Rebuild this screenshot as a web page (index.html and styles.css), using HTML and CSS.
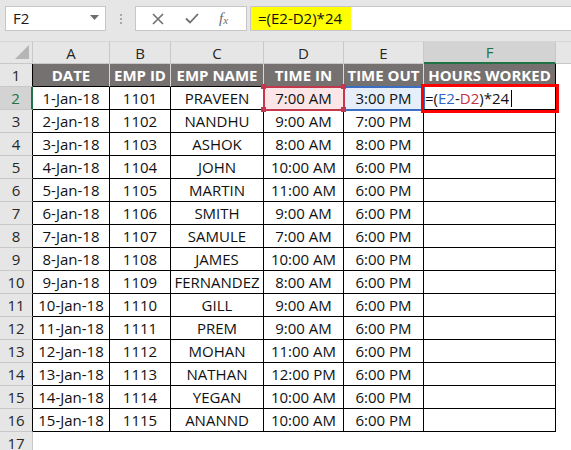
FILE: index.html
```html
<!DOCTYPE html>
<html>
<head>
<meta charset="utf-8">
<link rel="stylesheet" href="styles.css">
</head>
<body>
<div class="app">
  <div class="topbar">
    <div class="namebox">
      <span class="nb-text">F2</span>
      <svg class="caret" width="9" height="5" viewBox="0 0 9 5"><path d="M0 0H9L4.5 5Z" fill="#6d6d6d"/></svg>
    </div>
    <div class="dots"><i></i><i></i><i></i></div>
    <div class="fxbtns">
      <svg class="btn-x" width="12" height="12" viewBox="0 0 12 12"><path d="M1 1L11 11M11 1L1 11" stroke="#6f6f6f" stroke-width="1.6" fill="none"/></svg>
      <svg class="btn-ok" width="14" height="11" viewBox="0 0 14 11"><path d="M1 5.5L5 9.5L13 1" stroke="#6f6f6f" stroke-width="1.8" fill="none"/></svg>
      <span class="btn-fx">f<sub>x</sub></span>
    </div>
    <div class="formula"><span class="hl">=(E2-D2)*24</span></div>
  </div>

  <div class="sheet">
    <div class="corner"><svg width="14" height="14" viewBox="0 0 14 14"><path d="M14 0V14H0Z" fill="#b5b5b5"/></svg></div>
    <div class="ch">A</div>
    <div class="ch">B</div>
    <div class="ch">C</div>
    <div class="ch">D</div>
    <div class="ch">E</div>
    <div class="ch ch-sel">F</div>
    <div class="ch ch-last"></div>

    <div class="rh">1</div>
    <div class="hd">DATE</div><div class="hd">EMP ID</div><div class="hd">EMP NAME</div><div class="hd">TIME IN</div><div class="hd">TIME OUT</div><div class="hd hd-last">HOURS WORKED</div><div class="blank"></div>

    <div class="rh rh-sel">2</div>
    <div class="c">1-Jan-18</div><div class="c">1101</div><div class="c">PRAVEEN</div>
    <div class="c ref-d">7:00 AM<span class="hdl tl"></span><span class="hdl tr"></span><span class="hdl bl"></span><span class="hdl br"></span></div>
    <div class="c ref-e">3:00 PM</div>
    <div class="c edit">=(<span class="blue">E2</span>-<span class="red">D2</span>)*24<span class="cursor"></span></div><div class="blank"></div>

    <div class="rh">3</div>
    <div class="c">2-Jan-18</div><div class="c">1102</div><div class="c">NANDHU</div><div class="c">9:00 AM</div><div class="c">7:00 PM</div><div class="c"></div><div class="blank"></div>
    <div class="rh">4</div>
    <div class="c">3-Jan-18</div><div class="c">1103</div><div class="c">ASHOK</div><div class="c">8:00 AM</div><div class="c">8:00 PM</div><div class="c"></div><div class="blank"></div>
    <div class="rh">5</div>
    <div class="c">4-Jan-18</div><div class="c">1104</div><div class="c">JOHN</div><div class="c">10:00 AM</div><div class="c">6:00 PM</div><div class="c"></div><div class="blank"></div>
    <div class="rh">6</div>
    <div class="c">5-Jan-18</div><div class="c">1105</div><div class="c">MARTIN</div><div class="c">11:00 AM</div><div class="c">6:00 PM</div><div class="c"></div><div class="blank"></div>
    <div class="rh">7</div>
    <div class="c">6-Jan-18</div><div class="c">1106</div><div class="c">SMITH</div><div class="c">9:00 AM</div><div class="c">6:00 PM</div><div class="c"></div><div class="blank"></div>
    <div class="rh">8</div>
    <div class="c">7-Jan-18</div><div class="c">1107</div><div class="c">SAMULE</div><div class="c">7:00 AM</div><div class="c">6:00 PM</div><div class="c"></div><div class="blank"></div>
    <div class="rh">9</div>
    <div class="c">8-Jan-18</div><div class="c">1108</div><div class="c">JAMES</div><div class="c">10:00 AM</div><div class="c">6:00 PM</div><div class="c"></div><div class="blank"></div>
    <div class="rh">10</div>
    <div class="c">9-Jan-18</div><div class="c">1109</div><div class="c">FERNANDEZ</div><div class="c">8:00 AM</div><div class="c">6:00 PM</div><div class="c"></div><div class="blank"></div>
    <div class="rh">11</div>
    <div class="c">10-Jan-18</div><div class="c">1110</div><div class="c">GILL</div><div class="c">9:00 AM</div><div class="c">6:00 PM</div><div class="c"></div><div class="blank"></div>
    <div class="rh">12</div>
    <div class="c">11-Jan-18</div><div class="c">1111</div><div class="c">PREM</div><div class="c">9:00 AM</div><div class="c">6:00 PM</div><div class="c"></div><div class="blank"></div>
    <div class="rh">13</div>
    <div class="c">12-Jan-18</div><div class="c">1112</div><div class="c">MOHAN</div><div class="c">11:00 AM</div><div class="c">6:00 PM</div><div class="c"></div><div class="blank"></div>
    <div class="rh">14</div>
    <div class="c">13-Jan-18</div><div class="c">1113</div><div class="c">NATHAN</div><div class="c">12:00 PM</div><div class="c">6:00 PM</div><div class="c"></div><div class="blank"></div>
    <div class="rh">15</div>
    <div class="c">14-Jan-18</div><div class="c">1114</div><div class="c">YEGAN</div><div class="c">10:00 AM</div><div class="c">6:00 PM</div><div class="c"></div><div class="blank"></div>
    <div class="rh">16</div>
    <div class="c">15-Jan-18</div><div class="c">1115</div><div class="c">ANANND</div><div class="c">10:00 AM</div><div class="c">6:00 PM</div><div class="c"></div><div class="blank"></div>
    <div class="rh rh-out">17</div>
    <div class="empty"></div>
  </div>
</div>
</body>
</html>
```

FILE: styles.css
```css
* { box-sizing: border-box; }
html, body { margin: 0; padding: 0; background: #ffffff; }
body {
  font-family: "Open Sans", "Liberation Sans", sans-serif;
  font-size: 15px;
  color: #000;
  width: 571px;
  height: 450px;
  overflow: hidden;
}
.app { width: 571px; height: 450px; overflow: hidden; background: #fff; }

/* ---------- formula bar ---------- */
.topbar {
  height: 41px;
  background: #e6e6e6;
  display: flex;
  align-items: flex-start;
  padding-top: 6px;
  padding-left: 5px;
}
.namebox {
  width: 101px;
  height: 25px;
  background: #fff;
  border: 1px solid #c6c6c6;
  display: flex;
  align-items: center;
  justify-content: space-between;
  padding: 0 6px 0 7px;
}
.nb-text { font-size: 15px; color: #1a1a1a; line-height: 1; }
.caret { margin-bottom: 2px; }
.dots {
  width: 29px;
  height: 25px;
  display: flex;
  flex-direction: column;
  align-items: center;
  justify-content: center;
  gap: 2px;
}
.dots i { display: block; width: 2px; height: 2px; background: #a8a8a8; }
.fxbtns {
  width: 112px;
  height: 25px;
  background: #fff;
  border: 1px solid #c6c6c6;
  display: flex;
  align-items: center;
  padding-left: 16px;
}
.btn-x { margin-right: 21px; }
.btn-ok { margin-right: 20px; }
.btn-fx {
  font-family: "Liberation Serif", "DejaVu Serif", serif;
  font-style: italic;
  font-size: 15px;
  color: #6a6a6a;
  line-height: 1;
}
.btn-fx sub { font-size: 11px; vertical-align: -1px; }
.formula {
  flex: 1;
  height: 25px;
  margin-left: 3px;
  background: #fff;
  border: 1px solid #c6c6c6;
  border-right: none;
}
.hl {
  display: inline-block;
  height: 23px;
  width: 100px;
  background: #ffff00;
  line-height: 23px;
  padding-left: 7px;
  font-size: 15px;
  color: #111;
}

/* ---------- sheet ---------- */
.sheet {
  display: grid;
  grid-template-columns: 33px 77px 61px 93px 80px 80px 132px 1fr;
  grid-auto-rows: 23px;
}
.sheet > div {
  display: flex;
  align-items: center;
  justify-content: center;
  white-space: nowrap;
  position: relative;
}
.corner {
  background: #e6e6e6;
  border-right: 1px solid #c8c8c8;
  border-bottom: 1px solid #c8c8c8;
  border-top: 1px solid #d6d6d6;
  justify-content: flex-end !important;
  align-items: flex-end !important;
  padding: 0 3px 4px 0;
}
.ch {
  background: #e6e6e6;
  border-top: 1px solid #d6d6d6;
  border-right: 1px solid #c8c8c8;
  border-bottom: 1px solid #c8c8c8;
  color: #262626;
  font-size: 15px;
}
.ch-sel {
  background: #d3d3d3;
  color: #217346;
  border-bottom: 2px solid #217346;
}
.ch-last { border-right: none; }

.rh {
  background: #e6e6e6;
  border-bottom: 1px solid #c8c8c8;
  border-right: 1px solid #000;
  color: #262626;
  font-size: 15px;
}
.rh-sel {
  background: #d3d3d3;
  color: #217346;
  border-right: 2px solid #217346;
}
.rh-out { border-right: 1px solid #c8c8c8; }

.hd {
  background: #767171;
  color: #fff;
  font-weight: 700;
  font-size: 15px;
  border-right: 1px solid #d8d8d8;
  border-bottom: 1px solid #000;
}
.hd-last { border-right: 1px solid #000; }

.c {
  border-right: 1px solid #000;
  border-bottom: 1px solid #000;
  color: #111;
}
.blank { background: #fff; }
.empty { grid-column: 2 / 9; background: #fff; }

/* reference highlights */
.ref-d {
  background: #fbe5e7;
  outline: 2px solid #c4384e;
  outline-offset: -1px;
  z-index: 2;
}
.hdl {
  position: absolute;
  width: 5px;
  height: 5px;
  background: #c4384e;
}
.hdl.tl { left: -3px; top: -3px; }
.hdl.tr { right: -3px; top: -3px; }
.hdl.bl { left: -3px; bottom: -3px; }
.hdl.br { right: -3px; bottom: -3px; }
.ref-e {
  background: #e6eef9;
  outline: 2px solid #3c6fc4;
  outline-offset: -1px;
  z-index: 1;
}
.edit {
  justify-content: flex-start !important;
  padding-left: 1px;
  outline: 3px solid #ff0000;
  outline-offset: 0px;
  z-index: 3;
}
.blue { color: #2f63c4; }
.red { color: #c3304a; }
.cursor {
  display: inline-block;
  width: 1px;
  height: 17px;
  background: #000;
  margin-left: 2px;
}
```
